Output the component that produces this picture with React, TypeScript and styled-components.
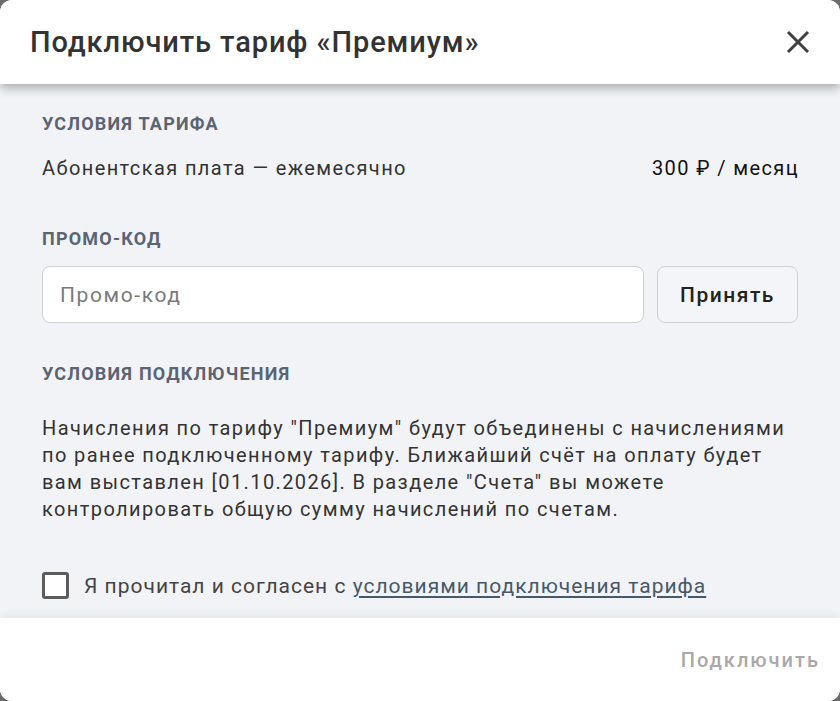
import React, { useState } from "react";
import styled, { createGlobalStyle } from "styled-components";

const GlobalStyle = createGlobalStyle`
  html, body {
    margin: 0;
    padding: 0;
    background: #6a6a6a;
  }
  * {
    box-sizing: border-box;
  }
`;

const Dialog = styled.div`
  width: 840px;
  height: 701px;
  border-radius: 12px;
  overflow: hidden;
  display: flex;
  flex-direction: column;
  background: #f2f3f7;
  font-family: Roboto, "Liberation Sans", sans-serif;
`;

const Header = styled.header`
  height: 84px;
  flex-shrink: 0;
  background: #fff;
  display: flex;
  align-items: center;
  justify-content: space-between;
  padding: 0 30px 0 30px;
  box-shadow: 0 4px 10px rgba(0, 0, 0, 0.3);
  position: relative;
  z-index: 2;
`;

const Title = styled.h1`
  margin: 0;
  font-size: 29px;
  font-weight: 500;
  color: #333;
  letter-spacing: 0.9px;
`;

const CloseButton = styled.button`
  border: none;
  background: none;
  padding: 0;
  width: 24px;
  height: 24px;
  display: flex;
  align-items: center;
  justify-content: center;
  cursor: pointer;
`;

const Body = styled.main`
  flex: 1;
  padding: 29px 42px 0;
  display: flex;
  flex-direction: column;
`;

const Label = styled.div<{ $top?: number }>`
  margin-top: ${(p) => p.$top ?? 0}px;
  font-size: 18px;
  font-weight: 700;
  color: #5a6472;
  text-transform: uppercase;
  letter-spacing: 1.2px;
  line-height: 22px;
`;

const PriceRow = styled.div`
  margin-top: 20px;
  display: flex;
  justify-content: space-between;
  align-items: baseline;
  font-size: 20px;
  line-height: 26px;
  letter-spacing: 1.4px;
  color: #333;
  .price {
    color: #111;
    margin-right: -1px;
  }
`;

const PromoRow = styled.div`
  margin-top: 16px;
  display: flex;
  gap: 13px;
`;

const PromoInput = styled.input`
  flex: 1;
  height: 57px;
  border: 1px solid #cfd0d4;
  border-radius: 8px;
  background: #fff;
  padding: 0 17px;
  font-family: inherit;
  font-size: 21px;
  letter-spacing: 1.6px;
  color: #333;
  outline: none;
  &::placeholder {
    color: #7a7a7a;
  }
`;

const AcceptButton = styled.button`
  width: 141px;
  height: 57px;
  border: 1px solid #cfd0d4;
  border-radius: 8px;
  background: #f4f5f8;
  font-family: inherit;
  font-size: 21px;
  font-weight: 500;
  letter-spacing: 1.5px;
  color: #222;
  cursor: pointer;
`;

const Paragraph = styled.p`
  margin: 30px 0 0;
  font-size: 20px;
  line-height: 27px;
  color: #333;
  letter-spacing: 1.4px;
`;

const AgreeRow = styled.label`
  margin-top: 49px;
  display: flex;
  align-items: center;
  gap: 15px;
  font-size: 21px;
  color: #444;
  letter-spacing: 1px;
  cursor: pointer;
  a {
    color: #46596a;
    text-decoration: underline;
    text-underline-offset: 3px;
  }
`;

const Box = styled.span<{ $checked: boolean }>`
  width: 27px;
  height: 27px;
  border: 3px solid #5c5c5c;
  border-radius: 3px;
  background: ${(p) => (p.$checked ? "#5c5c5c" : "#fff")};
  flex-shrink: 0;
`;

const Footer = styled.footer`
  height: 83px;
  flex-shrink: 0;
  background: #fff;
  display: flex;
  align-items: center;
  justify-content: flex-end;
  padding: 0 20px;
  box-shadow: 0 -3px 8px rgba(0, 0, 0, 0.06);
`;

const SubmitButton = styled.button<{ $enabled: boolean }>`
  border: none;
  background: none;
  padding: 0;
  font-family: inherit;
  font-size: 20px;
  font-weight: 500;
  letter-spacing: 2px;
  color: ${(p) => (p.$enabled ? "#2a6fdb" : "#a9a9a9")};
  cursor: ${(p) => (p.$enabled ? "pointer" : "default")};
`;

export default function App() {
  const [agreed, setAgreed] = useState(false);

  return (
    <>
      <GlobalStyle />
      <Dialog>
        <Header>
          <Title>Подключить тариф «Премиум»</Title>
          <CloseButton aria-label="Закрыть">
            <svg width="24" height="24" viewBox="0 0 24 24">
              <path d="M2 2 L22 22 M22 2 L2 22" stroke="#404040" strokeWidth="3" />
            </svg>
          </CloseButton>
        </Header>
        <Body>
          <Label>Условия тарифа</Label>
          <PriceRow>
            <span>Абонентская плата — ежемесячно</span>
            <span className="price">300 ₽ / месяц</span>
          </PriceRow>

          <Label $top={47}>Промо-код</Label>
          <PromoRow>
            <PromoInput placeholder="Промо-код" />
            <AcceptButton>Принять</AcceptButton>
          </PromoRow>

          <Label $top={40}>Условия подключения</Label>
          <Paragraph>
            Начисления по тарифу "Премиум" будут объединены с начислениями по ранее
            подключенному тарифу. Ближайший счёт на оплату будет вам выставлен
            [01.10.2026]. В разделе "Счета" вы можете контролировать общую сумму
            начислений по счетам.
          </Paragraph>

          <AgreeRow onClick={() => setAgreed(!agreed)}>
            <Box $checked={agreed} />
            <span>
              Я прочитал и согласен с <a href="#">условиями подключения тарифа</a>
            </span>
          </AgreeRow>
        </Body>
        <Footer>
          <SubmitButton $enabled={agreed} disabled={!agreed}>
            Подключить
          </SubmitButton>
        </Footer>
      </Dialog>
    </>
  );
}
